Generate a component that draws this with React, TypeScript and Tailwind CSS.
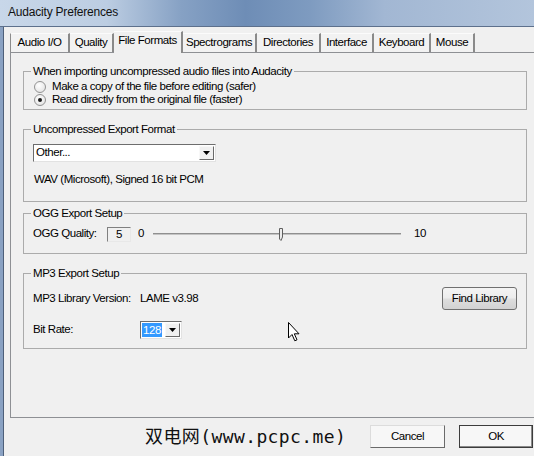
import React from "react";

const tabs: [string, string, boolean][] = [
  ["Audio I/O", "w-[60px] border-l border-l-[#8c8c8c]", false],
  ["Quality", "w-[44px]", false],
  ["File Formats", "w-[69px]", true],
  ["Spectrograms", "w-[74px]", false],
  ["Directories", "w-[64px]", false],
  ["Interface", "w-[53px]", false],
  ["Keyboard", "w-[57px]", false],
  ["Mouse", "w-[44px]", false],
];

function Tab({ label, cls, selected }: { label: string; cls: string; selected: boolean }) {
  return (
    <div
      className={`${cls} flex items-center justify-center border-r-2 border-r-[#8a8a8a] border-t border-t-[#fbfbfb] ${
        selected ? "h-[22px] relative top-px bg-[#f0f0f0] pb-[3px]" : "h-[19px] bg-[#f2f2f2]"
      }`}
    >
      <span className="whitespace-nowrap">{label}</span>
    </div>
  );
}

function Group({ title, cls, children }: { title: string; cls: string; children?: React.ReactNode }) {
  return (
    <fieldset className={`border border-[#ababab] w-[504px] ${cls}`}>
      <legend className="ml-[7px] px-[2px] leading-[14px] whitespace-nowrap">{title}</legend>
      {children}
    </fieldset>
  );
}

function Radio({ checked, label }: { checked: boolean; label: string }) {
  return (
    <div className="flex items-center h-[13px] pl-[10px]">
      <div className="w-[12px] h-[12px] rounded-full border border-[#939393] bg-[radial-gradient(circle_at_40%_35%,#ffffff,#dedede)] flex items-center justify-center">
        {checked && <div className="w-[4px] h-[4px] rounded-full bg-[#1c1c1c]" />}
      </div>
      <span className="ml-[6px] leading-[13px] whitespace-nowrap">{label}</span>
    </div>
  );
}

function DropButton() {
  return (
    <div className="w-[15px] my-[1px] mr-[1px] bg-[#f0f0f0] border border-t-[#f8f8f8] border-l-[#f8f8f8] border-r-[#6a6a6a] border-b-[#6a6a6a] flex items-center justify-center">
      <svg width="7" height="4" viewBox="0 0 7 4">
        <path d="M0 0 H7 L3.5 4 Z" fill="#000" />
      </svg>
    </div>
  );
}

export default function App() {
  return (
    <div className="relative w-[534px] h-[456px] overflow-hidden bg-[#f0f0f0] text-[11.5px] tracking-[-0.45px] text-black font-['Liberation_Sans',Arial,sans-serif]">
      {/* title bar */}
      <div className="h-[27px] border-b border-b-[#5d708c] flex items-center pl-[8px] pb-[2px] bg-[linear-gradient(90deg,#c8d7e9_0%,#bccde2_20%,#86a1c4_34%,#6e8db6_46%,#7e9bc0_58%,#a2b7d3_72%,#b3c5dc_100%)]">
        <span className="text-[12px] tracking-[-0.2px] text-[#111]">Audacity Preferences</span>
      </div>
      <div className="flex h-[429px]">
        <div className="w-[3px] bg-[#8aa2c3] border-r border-r-[#4e607a] box-content" />
        <div className="flex flex-col w-[530px]">
          {/* tabs */}
          <div className="h-[25px] flex items-end pl-[6px]">
            {tabs.map(([l, c, s]) => (
              <Tab key={l} label={l} cls={c} selected={s} />
            ))}
          </div>
          {/* panel */}
          <div className="ml-[6px] w-[540px] h-[366px] border border-[#8e9094] flex flex-col pl-[12px]">
            <Group title="When importing uncompressed audio files into Audacity" cls="mt-[11px] h-[46px]">
              <div className="mt-[2px]">
                <Radio checked={false} label="Make a copy of the file before editing (safer)" />
                <Radio checked={true} label="Read directly from the original file (faster)" />
              </div>
            </Group>
            <Group title="Uncompressed Export Format" cls="mt-[12px] h-[80px]">
              <div className="mt-[8px] ml-[9px] w-[183px] h-[18px] flex bg-white border border-t-[#6d6d6d] border-l-[#6d6d6d] border-r-[#e2e2e2] border-b-[#e2e2e2]">
                <span className="flex-1 pl-[2px] leading-[15px]">Other...</span>
                <DropButton />
              </div>
              <div className="mt-[10px] ml-[10px] leading-[14px]">WAV (Microsoft), Signed 16 bit PCM</div>
            </Group>
            <Group title="OGG Export Setup" cls="mt-[4px] h-[48px]">
              <div className="mt-[6px] ml-[9px] h-[16px] flex items-center">
                <span className="w-[74px] whitespace-nowrap">OGG Quality:</span>
                <div className="w-[24px] h-[15px] border border-t-[#808080] border-l-[#808080] border-r-[#e8e8e8] border-b-[#e8e8e8] bg-[#f0f0f0] flex items-center justify-center leading-[13px]">
                  5
                </div>
                <span className="ml-[7px]">0</span>
                <div className="ml-[9px] relative w-[248px] h-[16px] flex items-center">
                  <div className="w-full h-[2px] bg-[#8f8f8f] border-b border-b-[#c4c4c4]" />
                  <svg className="absolute left-[125px] top-[2px]" width="7" height="13" viewBox="0 0 7 13">
                    <path d="M1.5 0.5 H4.5 V9 L3 12.5 L1.5 11 Z" fill="#ececec" stroke="#5f5f5f" strokeWidth="1" />
                  </svg>
                </div>
                <span className="ml-[13px]">10</span>
              </div>
            </Group>
            <Group title="MP3 Export Setup" cls="mt-[12px] h-[83px]">
              <div className="mt-[7px] ml-[9px] h-[23px] flex items-center">
                <span className="w-[107px] whitespace-nowrap">MP3 Library Version:</span>
                <span>LAME v3.98</span>
                <button className="ml-auto mr-[9px] w-[75px] h-[23px] rounded-[3px] border border-[#707070] bg-[linear-gradient(180deg,#f4f4f4_0%,#ececec_48%,#dedede_52%,#d2d2d2_100%)] text-[11.5px] tracking-[-0.45px] font-['Liberation_Sans',Arial,sans-serif]">
                  Find Library
                </button>
              </div>
              <div className="mt-[11px] ml-[9px] h-[18px] flex items-center">
                <span className="w-[107px]">Bit Rate:</span>
                <div className="w-[42px] h-[18px] flex bg-white border border-t-[#6d6d6d] border-l-[#6d6d6d] border-r-[#e2e2e2] border-b-[#e2e2e2]">
                  <div className="flex-1 flex items-center pl-[1px]">
                    <span className="bg-[#3399ff] text-white px-[1px] leading-[14px]">128</span>
                  </div>
                  <DropButton />
                </div>
              </div>
            </Group>
          </div>
          {/* bottom row */}
          <div className="pt-[7px] flex items-center h-[30px]">
            <span className="ml-[141px] text-[18px] leading-[22px] tracking-[0.4px] font-['DejaVu_Sans_Mono','Noto_Sans_CJK_SC',monospace] whitespace-nowrap text-[#111]">
              双电网(www.pcpc.me)
            </span>
            <button className="ml-auto w-[75px] h-[23px] bg-[#f7f7f7] border border-t-[#dcdcdc] border-l-[#dcdcdc] border-r-[#6a6a6a] border-b-[#6a6a6a] text-[11.5px] tracking-[-0.45px] font-['Liberation_Sans',Arial,sans-serif]">
              Cancel
            </button>
            <button className="ml-[14px] mr-[1px] w-[74px] h-[23px] bg-[#f7f7f7] border border-[#3c3c3c] shadow-[inset_-1px_-1px_0_#8a8a8a] text-[11.5px] tracking-[-0.45px] font-['Liberation_Sans',Arial,sans-serif]">
              OK
            </button>
          </div>
        </div>
      </div>
      {/* mouse cursor */}
      <svg className="absolute left-[288px] top-[322px]" width="13" height="20" viewBox="0 0 13 20">
        <path d="M0.5 0.5 V16 L4 12.5 L6.8 18.8 L9 17.8 L6.3 11.8 H11 Z" fill="#fff" stroke="#000" strokeWidth="1" strokeLinejoin="round" />
      </svg>
    </div>
  );
}
